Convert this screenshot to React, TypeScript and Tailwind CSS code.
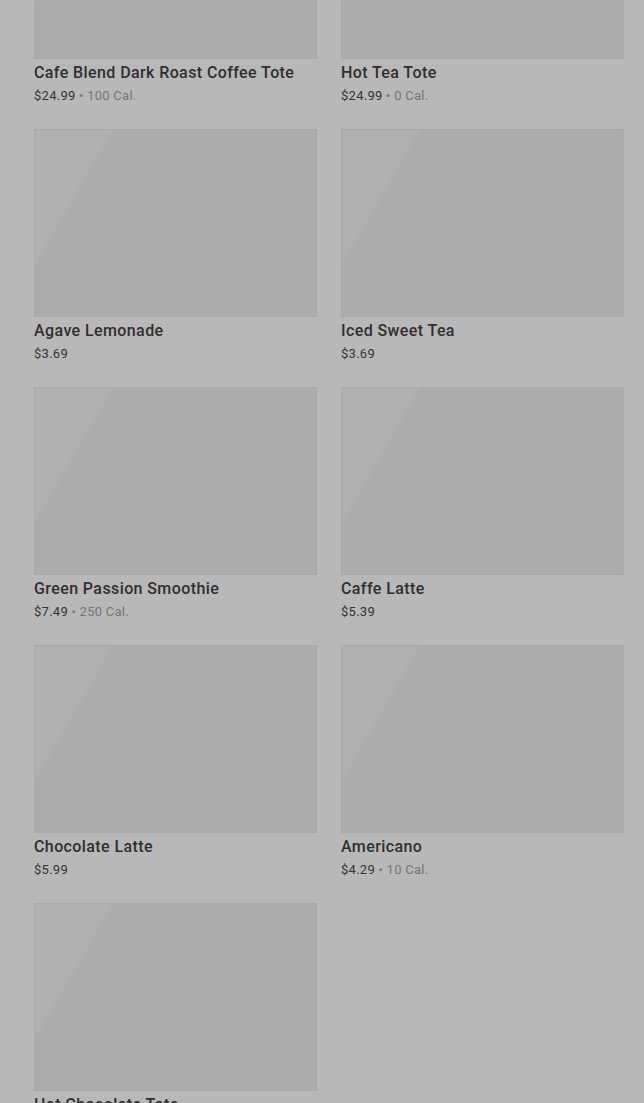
const items = [
  { name: 'Cafe Blend Dark Roast Coffee Tote', price: '$24.99', cal: '100 Cal.' },
  { name: 'Hot Tea Tote', price: '$24.99', cal: '0 Cal.' },
  { name: 'Agave Lemonade', price: '$3.69' },
  { name: 'Iced Sweet Tea', price: '$3.69' },
  { name: 'Green Passion Smoothie', price: '$7.49', cal: '250 Cal.' },
  { name: 'Caffe Latte', price: '$5.39' },
  { name: 'Chocolate Latte', price: '$5.99' },
  { name: 'Americano', price: '$4.29', cal: '10 Cal.' },
  { name: 'Hot Chocolate Tote', price: '$24.99', cal: '0 Cal.' },
];

function ProductCard({ name, price, cal }: { name: string; price: string; cal?: string }) {
  return (
    <div className="flex flex-col">
      <div className="h-[188px] w-full border border-[#a9a9a9] bg-[linear-gradient(120deg,#b0b0b0_0%,#b0b0b0_20%,#acacac_20%,#acacac_100%)]" />
      <p className="mt-[2px] text-[16px] leading-[24px] font-medium tracking-[0.025em] text-[#2f2f2f]">{name}</p>
      <p className="pt-[2px] text-[13px] leading-[18px] tracking-[0.02em] text-[#343434]">
        {price}
        {cal && (
          <span className="text-[#757575]">
            {' • '}
            {cal}
          </span>
        )}
      </p>
    </div>
  );
}

export default function App() {
  return (
    <div className="h-[1103px] w-full overflow-hidden bg-[#b8b8b8] font-['Roboto',sans-serif]">
      <div className="-mt-[129px] grid grid-cols-2 gap-x-[24px] gap-y-[24px] pl-[34px] pr-[20px]">
        {items.map((item) => (
          <ProductCard key={item.name} {...item} />
        ))}
      </div>
    </div>
  );
}
